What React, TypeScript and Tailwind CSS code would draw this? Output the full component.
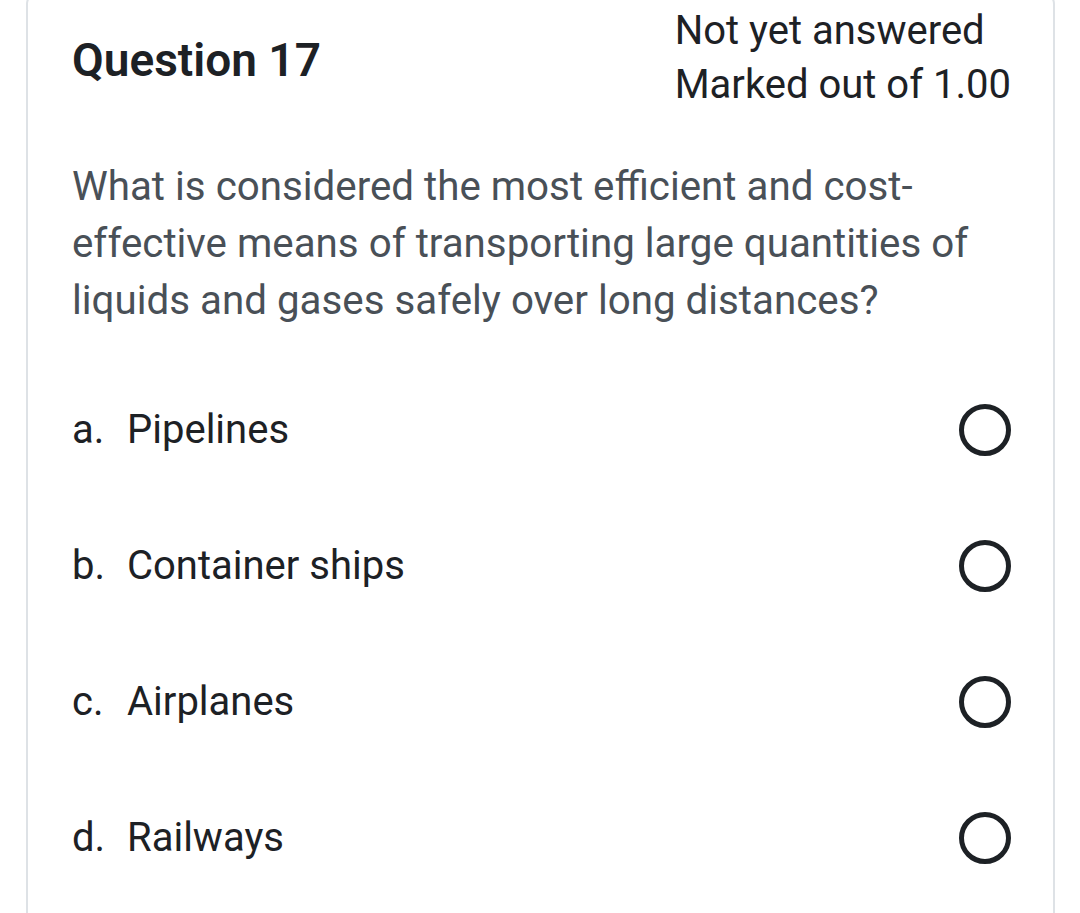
const options = [
  { letter: "a.", text: "Pipelines" },
  { letter: "b.", text: "Container ships" },
  { letter: "c.", text: "Airplanes" },
  { letter: "d.", text: "Railways" },
];

export default function App() {
  return (
    <div className="min-h-[913px] overflow-hidden bg-white font-['Roboto',sans-serif]">
      <div className="-mt-[8px] ml-[26px] mr-[25px] rounded-[12px] border-2 border-[#dee2e6] pb-10 pl-[44px] pr-[42px] pt-[10px]">
        {/* header */}
        <div className="flex items-start justify-between">
          <h2 className="mt-[29px] text-[46px] font-semibold leading-[54px] text-[#1d2125]">
            Question 17
          </h2>
          <div className="text-[40px] leading-[54px] text-[#1d2125]">
            <div>Not yet answered</div>
            <div>Marked out of 1.00</div>
          </div>
        </div>

        {/* question text */}
        <p className="mt-[46px] text-[40.3px] leading-[57px] text-[#495057]">
          What is considered the most efficient and cost-effective means of
          transporting large quantities of liquids and gases safely over long
          distances?
        </p>

        {/* answers */}
        <div className="mt-[33px] flex flex-col">
          {options.map((o) => (
            <label
              key={o.letter}
              className="flex h-[136px] items-center justify-between text-[40px] text-[#1d2125]"
            >
              <span className="flex">
                <span className="w-[55px]">{o.letter}</span>
                <span>{o.text}</span>
              </span>
              <span className="h-[52px] w-[52px] rounded-full border-[5px] border-[#1d2125]" />
            </label>
          ))}
        </div>
      </div>
    </div>
  );
}
